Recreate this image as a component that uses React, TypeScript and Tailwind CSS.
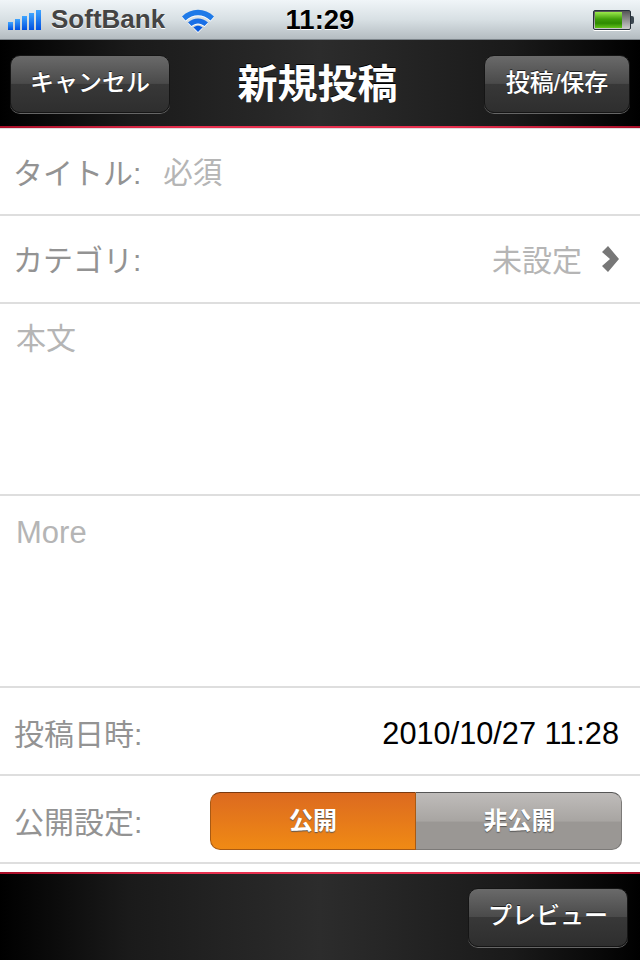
import React from "react";

const font = { fontFamily: '"Liberation Sans", "Noto Sans CJK JP", sans-serif' };

function NavButton({ label, className }: { label: string; className: string }) {
  return (
    <div
      className={`relative flex items-center justify-center rounded-[10px] border border-[#151515] bg-[linear-gradient(#6a6a6a_0%,#4a4a4a_49%,#383838_50%,#2e2e2e_100%)] pb-[3px] font-medium text-white shadow-[0_1px_0_#666] ${className}`}
    >
      <span className="[text-shadow:0_-1px_0_#222]">{label}</span>
    </div>
  );
}

function SignalBars() {
  const heights = [8, 11, 14, 17, 20];
  return (
    <div className="flex items-end gap-[2px]">
      {heights.map((h) => (
        <div
          key={h}
          className="w-[5px] bg-[linear-gradient(#3fa5ff,#0050e0)]"
          style={{ height: h }}
        />
      ))}
    </div>
  );
}

function Wifi() {
  return (
    <svg width="34" height="26" viewBox="0 0 34 26" className="drop-shadow-[0_1px_0_#fff]">
      <path d="M1 9.5 C10 0.5 24 0.5 33 9.5 L29.5 13.5 C22 6.5 12 6.5 4.5 13.5 Z" fill="#1f7ae8" />
      <path d="M7 15.5 C13 10 21 10 27 15.5 L23.5 19 C19.5 15.5 14.5 15.5 10.5 19 Z" fill="#1a6fe6" />
      <path d="M12.5 20.5 C15.5 18 18.5 18 21.5 20.5 L17 25 Z" fill="#0a5ce0" />
    </svg>
  );
}

function Battery() {
  return (
    <div className="flex items-center">
      <div className="flex h-[20px] w-[38px] items-stretch rounded-[2px] border border-[#26303a] bg-[linear-gradient(#555,#ccc)] p-[1px] shadow-[0_1px_0_#fff]">
        <div className="w-[27px] bg-[linear-gradient(#9be84c,#3f9e0a_45%,#2e8a00_70%,#62c41a)]" />
      </div>
      <div className="h-[8px] w-[3px] rounded-r-[2px] bg-[#3a4650]" />
    </div>
  );
}

function RedLine() {
  return <div className="h-[2px] bg-[linear-gradient(90deg,#a80e28,#e8304f_30%,#e8304f_70%,#a80e28)]" />;
}

const barBg = "bg-[linear-gradient(90deg,#000_0%,#1a1a1a_20%,#2c2c2c_50%,#1a1a1a_80%,#000_100%)]";

export default function App() {
  return (
    <div className="flex h-[960px] w-[640px] flex-col overflow-hidden bg-white" style={font}>
      {/* status bar */}
      <div className="flex h-[40px] items-center justify-between border-b border-[#7d858b] bg-[linear-gradient(#f0f5f8,#d8e0e4_50%,#b4bcc1)] pl-[8px] pr-[6px]">
        <div className="flex w-[240px] items-center">
          <SignalBars />
          <span className="ml-[10px] text-[26px] font-bold text-[#444] [text-shadow:0_1px_0_#fff]">SoftBank</span>
          <div className="ml-[16px]">
            <Wifi />
          </div>
        </div>
        <span className="mr-[2px] text-[27.5px] font-bold text-black [text-shadow:0_1px_0_#fff]">11:29</span>
        <div className="flex w-[240px] justify-end">
          <Battery />
        </div>
      </div>

      {/* nav bar */}
      <div className={`flex h-[86px] items-center justify-between pl-[10px] pr-[10px] pt-[2px] ${barBg}`}>
        <NavButton label="キャンセル" className="h-[58px] w-[160px] text-[24px]" />
        <h1 className="mr-[19px] text-[40px] font-bold text-white [text-shadow:0_-1px_0_#000]">新規投稿</h1>
        <NavButton label="投稿/保存" className="h-[58px] w-[146px] text-[24px]" />
      </div>
      <RedLine />

      {/* form */}
      <div className="flex h-[88px] items-center gap-[22px] border-b-2 border-t border-[#dedede] pl-[13px] pt-[4px] text-[30px]">
        <span className="text-[#939393]">タイトル:</span>
        <span className="text-[29.5px] text-[#b5b5b5]">必須</span>
      </div>
      <div className="flex h-[88px] items-center justify-between border-b-2 border-[#dedede] pl-[13px] pr-[20px] text-[30px]">
        <span className="pt-[3px] text-[#939393]">カテゴリ:</span>
        <div className="flex items-center gap-[18px]">
          <span className="pt-[3px] text-[#b5b5b5]">未設定</span>
          <svg width="20" height="26" viewBox="0 0 20 26">
            <polygon points="2,6 8,0 19,13 8,26 2,20 10,13" fill="#777" />
          </svg>
        </div>
      </div>
      <div className="h-[192px] border-b-2 border-[#dedede] pl-[16px] pt-[12px] text-[30px] text-[#b5b5b5]">本文</div>
      <div className="h-[192px] border-b-2 border-[#dedede] pl-[16px] pt-[14px] text-[31px] text-[#b5b5b5]">More</div>
      <div className="flex h-[88px] items-center justify-between border-b-2 border-[#dedede] pl-[14px] pr-[21px] pt-[6px]">
        <span className="text-[30px] text-[#939393]">投稿日時:</span>
        <span className="text-[30.7px] text-black">2010/10/27 11:28</span>
      </div>
      <div className="flex h-[88px] items-center justify-between border-b-2 border-[#dedede] pl-[14px] pr-[18px] pt-[4px]">
        <span className="pt-[2px] text-[30px] text-[#939393]">公開設定:</span>
        <div className="flex h-[58px] w-[412px] text-[24px] font-bold text-white [text-shadow:0_1px_1px_#555]">
          <div className="flex w-[206px] items-center justify-center rounded-l-[10px] border border-[#a85a14] border-t-[#7a3a10] bg-[linear-gradient(#dc6a20,#f08a14)]">
            公開
          </div>
          <div className="flex flex-1 items-center justify-center rounded-r-[10px] border border-l-0 border-[#7c7a78] border-t-[#555] bg-[linear-gradient(#bfbcba,#a8a5a2_50%,#9a9794_52%,#9a9794)] pl-[2px]">
            非公開
          </div>
        </div>
      </div>
      <div className="h-[8px]" />
      <RedLine />

      {/* bottom bar */}
      <div className={`flex flex-1 items-start justify-end pr-[12px] pt-[14px] ${barBg}`}>
        <NavButton label="プレビュー" className="h-[59px] w-[160px] text-[24px]" />
      </div>
    </div>
  );
}
